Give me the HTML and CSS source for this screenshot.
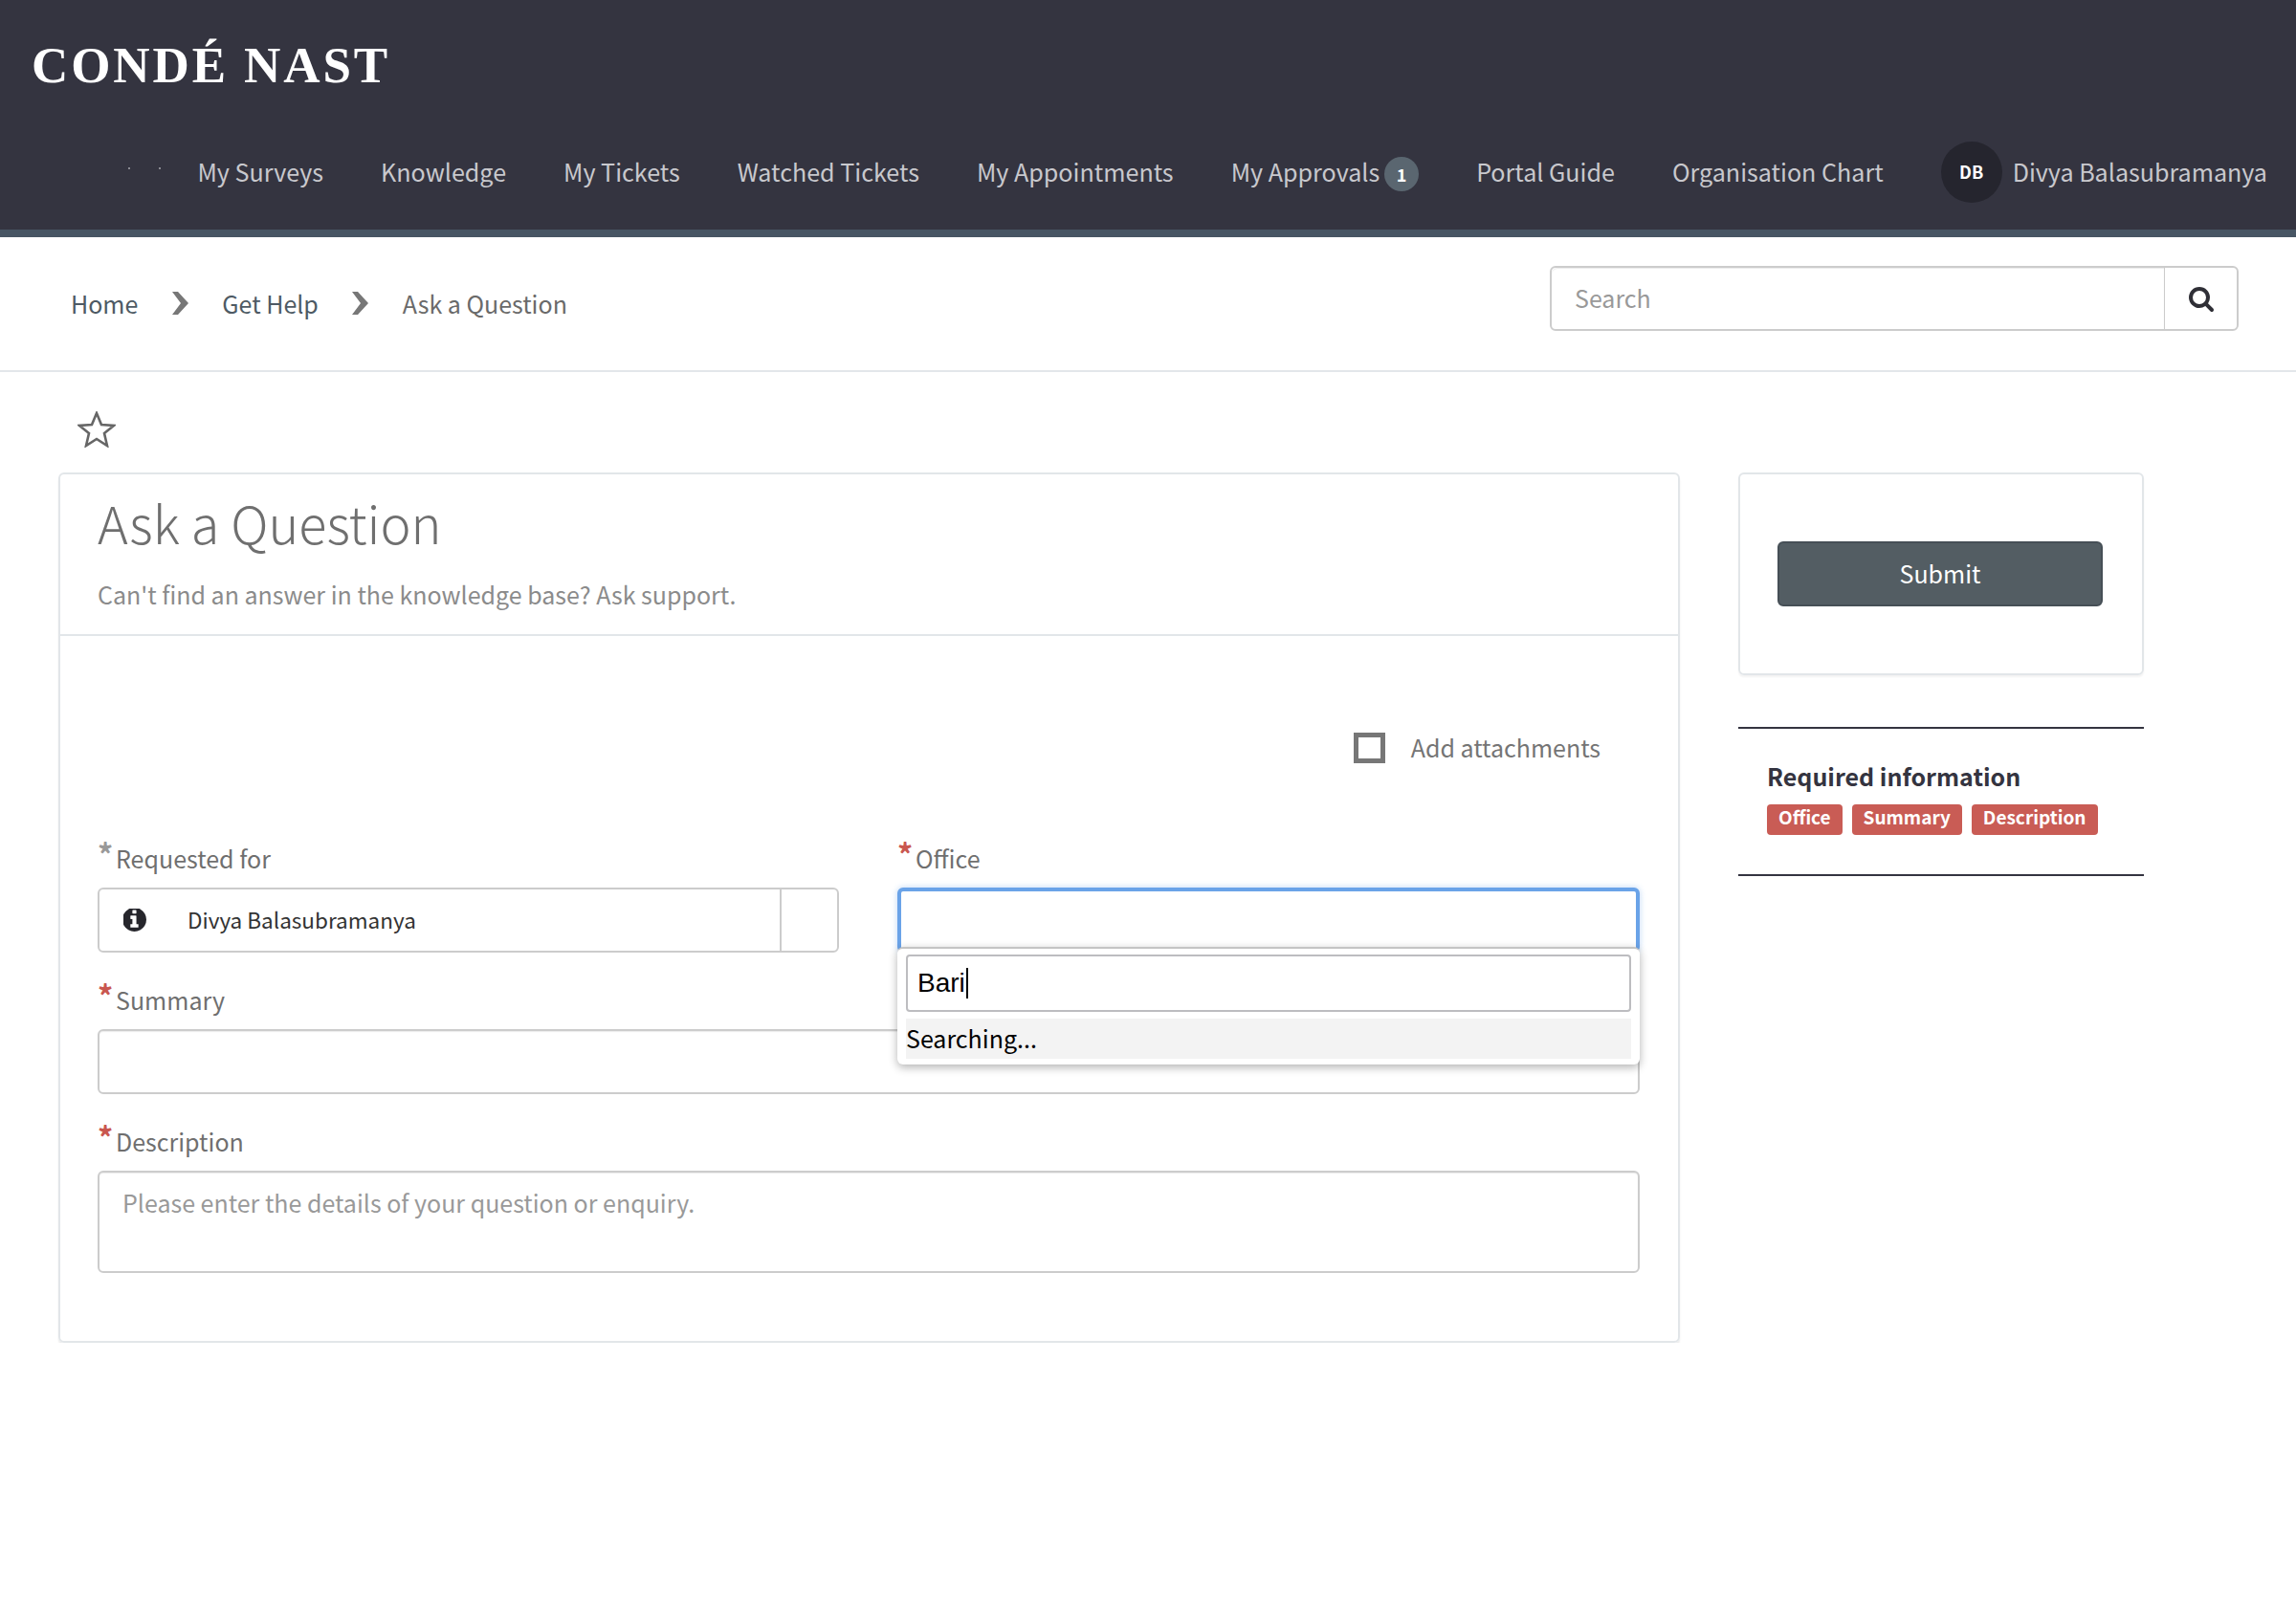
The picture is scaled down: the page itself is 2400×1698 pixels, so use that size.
FILE: index.html
```html
<!DOCTYPE html>
<html lang="en">

<head>
    <meta charset="UTF-8">
    <title>Ask a Question</title>
    <link rel="stylesheet" href="styles.css">
</head>

<body>
    <header class="topBar">
        <div class="logoRow">
            <span class="logo">CONDÉ NAST</span>
        </div>
        <nav class="navRow">
            <span class="navDots"><i></i><i></i></span>
            <a class="navLink">My Surveys</a>
            <a class="navLink">Knowledge</a>
            <a class="navLink">My Tickets</a>
            <a class="navLink">Watched Tickets</a>
            <a class="navLink">My Appointments</a>
            <a class="navLink">My Approvals<span class="badge">1</span></a>
            <a class="navLink">Portal Guide</a>
            <a class="navLink">Organisation Chart</a>
            <a class="navUser"><span class="avatar">DB</span><span class="userName">Divya Balasubramanya</span></a>
        </nav>
    </header>

    <div class="crumbBar">
        <div class="crumbs">
            <a>Home</a>
            <svg class="crumbSep" viewBox="0 0 17 24"><path d="M0 0h6l11 12L6 24H0l9-12z"/></svg>
            <a>Get Help</a>
            <svg class="crumbSep" viewBox="0 0 17 24"><path d="M0 0h6l11 12L6 24H0l9-12z"/></svg>
            <span class="crumbLast">Ask a Question</span>
        </div>
        <div class="searchBox">
            <input class="searchInput" type="text" placeholder="Search">
            <button class="searchBtn">
                <svg viewBox="0 0 1792 1792"><path d="M1216 832q0-185-131.500-316.500t-316.500-131.500-316.500 131.500-131.500 316.500 131.500 316.500 316.500 131.500 316.500-131.500 131.500-316.500zm512 832q0 52-38 90t-90 38q-54 0-90-38l-343-342q-179 124-399 124-143 0-273.500-55.500t-225-150-150-225-55.500-273.500 55.500-273.500 150-225 225-150 273.500-55.500 273.500 55.500 225 150 150 225 55.500 273.500q0 220-124 399l343 343q37 37 37 90z"/></svg>
            </button>
        </div>
    </div>

    <div class="starRow">
        <svg class="star" viewBox="0 0 40 38"><polygon points="20,2 25,14 38,15 28,23 31,36 20,29 9,36 12,23 2,15 15,14"/></svg>
    </div>

    <main class="pageGrid">
        <section class="card formCard">
            <div class="formHead">
                <h1>Ask a Question</h1>
                <p>Can't find an answer in the knowledge base? Ask support.</p>
            </div>
            <div class="formBody">
                <div class="attachRow">
                    <span class="checkBox"></span>
                    <span>Add attachments</span>
                </div>
                <div class="twoCols">
                    <div class="field">
                        <label class="fieldLabel"><span class="mark">*</span>Requested for</label>
                        <div class="control refControl">
                            <svg class="infoIcon" viewBox="192 192 1472 1472"><path d="M1152 1376v-160q0-14-9-23t-23-9h-96v-512q0-14-9-23t-23-9h-320q-14 0-23 9t-9 23v160q0 14 9 23t23 9h96v320h-96q-14 0-23 9t-9 23v160q0 14 9 23t23 9h448q14 0 23-9t9-23zm-128-896v-160q0-14-9-23t-23-9h-192q-14 0-23 9t-9 23v160q0 14 9 23t23 9h192q14 0 23-9t9-23zm640 416q0 209-103 385.500t-279.500 279.500-385.500 103-385.500-103-279.500-279.500-103-385.500 103-385.500 279.500-279.500 385.500-103 385.500 103 279.500 279.500 103 385.500z"/></svg>
                            <span class="refName">Divya Balasubramanya</span>
                            <span class="refSide"></span>
                        </div>
                    </div>
                    <div class="field officeField">
                        <label class="fieldLabel"><span class="mark red">*</span>Office</label>
                        <div class="control focused"></div>
                        <div class="dropMenu">
                            <div class="dropInput">Bari<span class="caret"></span></div>
                            <div class="dropRow">Searching...</div>
                        </div>
                    </div>
                </div>
                <div class="field">
                    <label class="fieldLabel"><span class="mark red">*</span>Summary</label>
                    <div class="control"></div>
                </div>
                <div class="field">
                    <label class="fieldLabel"><span class="mark red">*</span>Description</label>
                    <textarea class="control descArea" placeholder="Please enter the details of your question or enquiry."></textarea>
                </div>
            </div>
        </section>

        <aside class="sideCol">
            <div class="card submitCard">
                <button class="submitBtn">Submit</button>
            </div>
            <div class="requiredBox">
                <h2>Required information</h2>
                <div class="pills">
                    <span class="pill">Office</span>
                    <span class="pill">Summary</span>
                    <span class="pill">Description</span>
                </div>
            </div>
        </aside>
    </main>
</body>

</html>
```

FILE: styles.css
```css
* {
    box-sizing: border-box;
}

body {
    margin: 0;
    background: #fff;
    color: #6f6f6f;
    font-family: "Noto Sans CJK SC", "Noto Sans", sans-serif;
    font-size: 25px;
    line-height: 36px;
}

/* header */
.topBar {
    height: 248px;
    background: #343440;
    border-bottom: 8px solid #475563;
}

.logoRow {
    height: 140px;
    padding: 38px 0 0 33px;
}

.logo {
    font-family: "Liberation Serif", serif;
    font-size: 53px;
    font-weight: 700;
    line-height: 60px;
    letter-spacing: 2.9px;
    color: #fff;
}

.navRow {
    display: flex;
    align-items: center;
    height: 64px;
    margin-top: 8px;
    padding-right: 30px;
    gap: 60px;
    justify-content: flex-end;
    color: #c8c8cd;
    font-size: 25.1px;
    line-height: 34px;
    white-space: nowrap;
}

.navDots {
    display: flex;
    gap: 30px;
    margin-right: -22px;
    margin-bottom: 8px;
}

.navDots i {
    width: 2px;
    height: 2px;
    background: #8a8a92;
}

.navLink {
    display: flex;
    align-items: center;
    padding-bottom: 2px;
}

.badge {
    display: inline-flex;
    align-items: center;
    justify-content: center;
    width: 36px;
    height: 36px;
    margin-left: 5px;
    margin-top: 5px;
    border-radius: 50%;
    background: #5a6670;
    color: #fff;
    font-size: 18px;
    font-weight: 700;
}

.navUser {
    display: flex;
    align-items: center;
    gap: 11px;
}

.userName {
    padding-bottom: 2px;
}

.avatar {
    display: flex;
    align-items: center;
    justify-content: center;
    width: 64px;
    height: 64px;
    padding-bottom: 2px;
    border-radius: 50%;
    background: #25252e;
    color: #fff;
    font-size: 18px;
    font-weight: 700;
}

/* breadcrumb + search */
.crumbBar {
    display: flex;
    justify-content: space-between;
    align-items: flex-start;
    height: 141px;
    padding: 31px 60px 0 74px;
    border-bottom: 2px solid #e3e7ea;
}

.crumbs {
    display: flex;
    align-items: center;
    gap: 35.5px;
    height: 76px;
    color: #4e5a64;
}

.crumbSep {
    width: 17px;
    height: 24px;
    fill: #777;
}

.crumbLast {
    color: #6a6a6a;
}

.searchBox {
    display: flex;
    width: 720px;
    height: 68px;
    margin-top: -1px;
    border: 2px solid #ccc;
    border-radius: 6px;
}

.searchInput {
    flex: 1;
    min-width: 0;
    padding: 0 24px 3px;
    border: 0;
    border-right: 1px solid #ccc;
    border-radius: 6px 0 0 6px;
    background: transparent;
    box-shadow: inset 0 1px 1px rgba(0, 0, 0, .08);
    font: inherit;
}

.searchInput::placeholder,
.descArea::placeholder {
    color: #999;
    opacity: 1;
}

.searchBtn {
    display: flex;
    align-items: center;
    justify-content: center;
    width: 75px;
    padding: 0;
    border: 0;
    background: transparent;
}

.searchBtn svg {
    width: 28px;
    height: 28px;
    fill: #2f2f36;
}

/* star */
.starRow {
    height: 105px;
    padding: 41px 0 0 81px;
}

.star {
    display: block;
    width: 40px;
    height: 38px;
    fill: none;
    stroke: #666;
    stroke-width: 2.6;
}

/* page */
.pageGrid {
    display: grid;
    grid-template-columns: 1695px 424px;
    column-gap: 61px;
    align-items: start;
    padding-left: 61px;
}

.card {
    border: 2px solid #e2e6e9;
    border-radius: 6px;
    box-shadow: 0 2px 2px rgba(0, 0, 0, .05);
}

.formCard {
    height: 910px;
    box-shadow: 0 3px 2px rgba(0, 0, 0, .08);
}

.formHead {
    height: 169px;
    padding: 15px 39px 0;
    border-bottom: 2px solid #e2e6e9;
}

.formHead h1 {
    margin: 0;
    color: #6f6f6f;
    font-size: 54px;
    font-weight: 300;
    line-height: 70px;
}

.formHead p {
    margin: 22px 0 0;
    color: #8b8b8b;
    line-height: 36px;
}

.formBody {
    padding: 0 40px 0 39px;
}

.attachRow {
    display: flex;
    align-items: center;
    justify-content: flex-end;
    gap: 27px;
    height: 60px;
    margin-top: 86px;
    padding-right: 41px;
    color: #757575;
}

.checkBox {
    width: 33px;
    height: 32px;
    margin-top: 2px;
    border: 5px solid #777;
}

.twoCols {
    display: grid;
    grid-template-columns: 775px 776px;
    column-gap: 61px;
    margin-top: 69px;
}

.field {
    position: relative;
}

.fieldLabel {
    display: block;
    height: 48px;
    line-height: 24px;
    white-space: nowrap;
}

.mark {
    display: inline-block;
    width: 19px;
    color: #999;
    font-size: 32px;
    font-weight: 700;
    vertical-align: 2px;
}

.mark.red {
    color: #c9574f;
}

.control {
    display: block;
    width: 100%;
    height: 68px;
    border: 2px solid #ccc;
    border-radius: 6px;
    background: #fff;
    box-shadow: inset 0 1px 1px rgba(0, 0, 0, .08);
}

.refControl {
    display: flex;
    align-items: center;
    padding-left: 25px;
    box-shadow: none;
}

.infoIcon {
    width: 24px;
    height: 24px;
    fill: #26262c;
}

.refName {
    flex: 1;
    margin: -2px 0 0 43px;
    color: #333;
    font-size: 22.5px;
}

.refSide {
    width: 60px;
    height: 100%;
    border-left: 2px solid #ccc;
}

.focused {
    border: 4px solid #6aa3e8;
    box-shadow: 0 0 6px rgba(106, 163, 232, .45);
}

.dropMenu {
    position: absolute;
    top: 110px;
    left: 0;
    z-index: 2;
    width: 776px;
    height: 123px;
    padding: 6px 9px 0;
    border-top: 2px solid #c4c4c4;
    border-radius: 6px;
    background: #fff;
    box-shadow: 0 3px 10px rgba(0, 0, 0, .3);
    color: #000;
}

.dropInput {
    display: flex;
    align-items: center;
    height: 60px;
    padding-left: 10px;
    border: 2px solid #bdbdc0;
    border-radius: 4px;
    font-family: "Liberation Sans", sans-serif;
    font-size: 28px;
}

.caret {
    width: 2px;
    height: 32px;
    margin-left: 1px;
    background: #000;
}

.dropRow {
    height: 42px;
    margin-top: 7px;
    background: #f3f3f3;
    line-height: 40px;
}

.descArea {
    height: 107px;
    padding: 13px 24px;
    color: #333;
    font: inherit;
    resize: none;
}

.formBody > .field {
    margin-top: 32px;
}

/* right column */
.submitCard {
    height: 212px;
    padding: 70px 39px 0;
}

.submitBtn {
    width: 340px;
    height: 68px;
    padding-bottom: 3px;
    border: 2px solid #464f56;
    border-radius: 6px;
    background: #535d63;
    color: #fff;
    font: inherit;
}

.requiredBox {
    height: 156px;
    margin-top: 54px;
    padding: 31px 30px 0;
    border-top: 2px solid #343440;
    border-bottom: 2px solid #343440;
}

.requiredBox h2 {
    margin: 0;
    color: #343440;
    font-size: 25px;
    font-weight: 700;
    line-height: 36px;
}

.pills {
    display: flex;
    gap: 10px;
    margin-top: 12px;
}

.pill {
    height: 32px;
    padding: 0 12px;
    border-radius: 4px;
    background: #c95c55;
    color: #fff;
    font-size: 19px;
    font-weight: 700;
    line-height: 26px;
}
```
